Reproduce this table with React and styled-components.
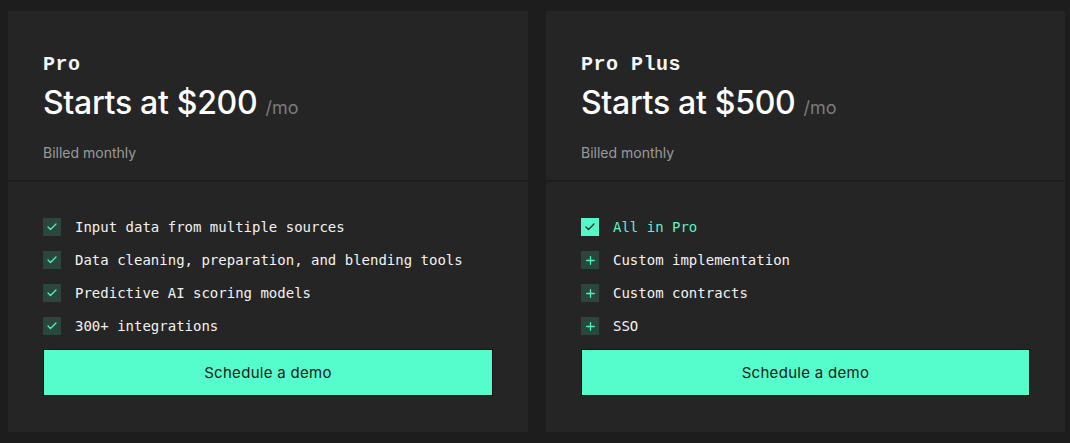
import styled, { createGlobalStyle } from 'styled-components';
import { Check, Plus } from 'lucide-react';

const GlobalStyle = createGlobalStyle`
  body {
    margin: 0;
    background: #1d1d1d;
    font-family: Inter, 'Noto Sans', sans-serif;
  }
`;

const plans = [
  {
    name: 'Pro',
    price: '$200',
    features: [
      { text: 'Input data from multiple sources', kind: 'check' },
      { text: 'Data cleaning, preparation, and blending tools', kind: 'check' },
      { text: 'Predictive AI scoring models', kind: 'check' },
      { text: '300+ integrations', kind: 'check' },
    ],
  },
  {
    name: 'Pro Plus',
    price: '$500',
    features: [
      { text: 'All in Pro', kind: 'included' },
      { text: 'Custom implementation', kind: 'plus' },
      { text: 'Custom contracts', kind: 'plus' },
      { text: 'SSO', kind: 'plus' },
    ],
  },
];

function App() {
  return (
    <>
      <GlobalStyle />
      <Wrapper>
        {plans.map((plan) => (
          <Card key={plan.name}>
            <Header>
              <PlanName>{plan.name}</PlanName>
              <Price>
                Starts at {plan.price} <Per>/mo</Per>
              </Price>
              <Billing>Billed monthly</Billing>
            </Header>
            <Body>
              <FeatureList>
                {plan.features.map((f) => (
                  <Feature key={f.text} $highlight={f.kind === 'included'}>
                    <IconBox $filled={f.kind === 'included'}>
                      {f.kind === 'plus' ? (
                        <Plus size={13} strokeWidth={2.4} />
                      ) : (
                        <Check size={12} strokeWidth={2.6} />
                      )}
                    </IconBox>
                    {f.text}
                  </Feature>
                ))}
              </FeatureList>
              <DemoButton type='button'>Schedule a demo</DemoButton>
            </Body>
          </Card>
        ))}
      </Wrapper>
    </>
  );
}

const Wrapper = styled.main`
  display: grid;
  grid-template-columns: 520px 519px;
  column-gap: 18px;
  padding: 11px 8px;
`;

const Card = styled.section`
  display: flex;
  flex-direction: column;
  gap: 2px;
`;

const Header = styled.div`
  background: #252525;
  height: 169px;
  box-sizing: border-box;
  padding: 42px 35px 0;
`;

const PlanName = styled.div`
  font-family: 'Liberation Mono', monospace;
  font-size: 20px;
  font-weight: 700;
  line-height: 24px;
  color: #f4f4f4;
  letter-spacing: 0.5px;
`;

const Price = styled.div`
  margin-top: 6px;
  font-size: 32px;
  line-height: 40px;
  font-weight: 500;
  letter-spacing: -0.3px;
  color: #ffffff;
`;

const Per = styled.span`
  font-size: 18px;
  font-weight: 400;
  letter-spacing: 0;
  color: #7c7c7c;
`;

const Billing = styled.div`
  margin-top: 15px;
  font-size: 14px;
  line-height: 20px;
  color: #9a9a9a;
`;

const Body = styled.div`
  background: #252525;
  padding: 36px 35px;
  display: flex;
  flex-direction: column;
  gap: 14px;
`;

const FeatureList = styled.ul`
  list-style: none;
  margin: 0;
  padding: 0;
  display: flex;
  flex-direction: column;
  gap: 15px;
`;

const Feature = styled.li`
  display: flex;
  align-items: center;
  gap: 14px;
  height: 18px;
  font-family: 'DejaVu Sans Mono', monospace;
  font-size: 14px;
  color: ${(p) => (p.$highlight ? '#5cf3c6' : '#f2f2f2')};
`;

const IconBox = styled.span`
  flex: none;
  width: 18px;
  height: 18px;
  display: flex;
  align-items: center;
  justify-content: center;
  background: ${(p) => (p.$filled ? '#56f7c9' : '#2b463c')};
  color: ${(p) => (p.$filled ? '#1b2a25' : '#52f0c0')};
`;

const DemoButton = styled.button`
  height: 47px;
  width: 100%;
  background: #56fdcc;
  border: 1px solid #111;
  color: #1a1a1a;
  font-family: Inter, sans-serif;
  font-size: 15px;
  letter-spacing: 0.3px;
  cursor: pointer;
`;

export default App;
